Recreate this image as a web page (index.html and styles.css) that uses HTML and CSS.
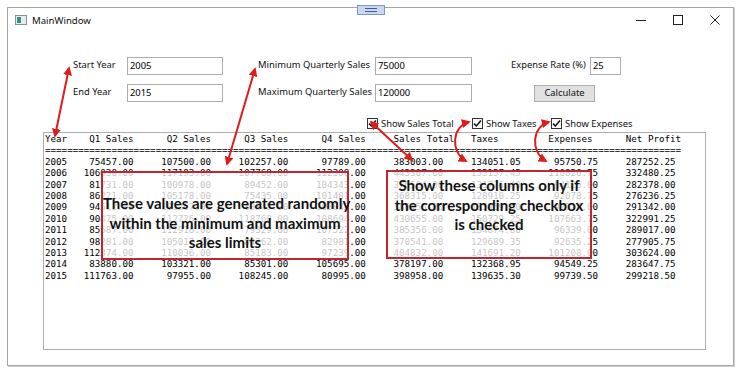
FILE: index.html
```html
<!DOCTYPE html>
<html>
<head>
<meta charset="utf-8">
<link rel="stylesheet" href="styles.css">
</head>
<body>
<div class="window">
  <div class="titlebar">
    <svg class="appicon" width="12" height="10" viewBox="0 0 12 10"><rect x="0.5" y="0.5" width="11" height="9" fill="#e4ecf2" stroke="#8194a4"/><rect x="2" y="2" width="4" height="6" fill="#3b8f80"/></svg>
    <span class="title">MainWindow</span>
    <div class="controls">
      <div class="ctl"><svg width="10" height="10" viewBox="0 0 10 10"><line x1="0" y1="5.5" x2="10" y2="5.5" stroke="#222" stroke-width="1"/></svg></div>
      <div class="ctl"><svg width="10" height="10" viewBox="0 0 10 10"><rect x="0.5" y="0.5" width="9" height="9" fill="none" stroke="#222" stroke-width="1"/></svg></div>
      <div class="ctl"><svg width="10" height="10" viewBox="0 0 10 10"><path d="M0.5 0.5 L9.5 9.5 M9.5 0.5 L0.5 9.5" stroke="#222" stroke-width="1"/></svg></div>
    </div>
  </div>

  <div class="form">
    <div class="group g1">
      <span class="lbl">Start Year</span><div class="field">2005</div>
      <span class="lbl">End Year</span><div class="field">2015</div>
    </div>
    <div class="group g2">
      <span class="lbl">Minimum Quarterly Sales</span><div class="field">75000</div>
      <span class="lbl">Maximum Quarterly Sales</span><div class="field">120000</div>
    </div>
    <div class="group g3">
      <span class="lbl">Expense Rate (%)</span><div class="field">25</div>
      <button class="calc">Calculate</button>
    </div>
  </div>

  <div class="checks">
    <label class="check c1"><span class="box"><svg width="9" height="9" viewBox="0 0 9 9"><path d="M1 4.6 L3.4 7 L8 1.6" fill="none" stroke="#111" stroke-width="1.5"/></svg></span>Show Sales Total</label>
    <label class="check c2"><span class="box"><svg width="9" height="9" viewBox="0 0 9 9"><path d="M1 4.6 L3.4 7 L8 1.6" fill="none" stroke="#111" stroke-width="1.5"/></svg></span>Show Taxes</label>
    <label class="check c3"><span class="box"><svg width="9" height="9" viewBox="0 0 9 9"><path d="M1 4.6 L3.4 7 L8 1.6" fill="none" stroke="#111" stroke-width="1.5"/></svg></span>Show Expenses</label>
  </div>

<pre class="output">Year    Q1 Sales      Q2 Sales      Q3 Sales      Q4 Sales     Sales Total   Taxes         Expenses      Net Profit
===================================================================================================================
2005    75457.00     107500.00     102257.00      97789.00     383003.00     134051.05      95750.75     287252.25
2006   106038.00     117193.00     107768.00     112308.00     443307.00     155157.45     110826.75     332480.25
2007    81731.00     100978.00      89452.00     104343.00     376504.00     131776.40      94126.00     282378.00
2008    86221.00     105178.00      75435.00     101481.00     368315.00     128910.25      92078.75     276236.25
2009    94512.00     101267.00      88845.00     103832.00     388456.00     135959.60      97114.00     291342.00
2010    90475.00     112726.00     118760.00     108694.00     430655.00     150729.25     107663.75     322991.25
2011    85587.00     112918.00      79329.00     107522.00     385356.00     134874.60      96339.00     289017.00
2012    98281.00     105017.00      84262.00      82981.00     370541.00     129689.35      92635.25     277905.75
2013   112374.00     110036.00      85183.00      97239.00     404832.00     141691.20     101208.00     303624.00
2014    83880.00     103321.00      85301.00     105695.00     378197.00     132368.95      94549.25     283647.75
2015   111763.00      97955.00     108245.00      80995.00     398958.00     139635.30      99739.50     299218.50</pre>
</div>

<div class="devtab"><svg width="28" height="10" viewBox="0 0 28 10"><rect x="0.5" y="0.5" width="27" height="9" fill="#cbd7ef" stroke="#7f96c6"/><line x1="8" y1="3.5" x2="20" y2="3.5" stroke="#3c5c9c"/><line x1="8" y1="6.5" x2="20" y2="6.5" stroke="#3c5c9c"/></svg></div>

<div class="note n1">These values are generated randomly<br>within the minimum and maximum<br>sales limits</div>
<div class="note n2">Show these columns only if<br>the corresponding checkbox<br>is checked</div>

<svg class="arrows" width="740" height="373" viewBox="0 0 740 373">
  <defs>
    <marker id="ah" viewBox="0 0 10 10" refX="8" refY="5" markerWidth="4.5" markerHeight="4.5" orient="auto-start-reverse">
      <path d="M0 0 L10 5 L0 10 z" fill="#e01b1b"/>
    </marker>
  </defs>
  <g fill="none" stroke="#e01b1b" stroke-width="2" marker-start="url(#ah)" marker-end="url(#ah)">
    <line x1="69" y1="68" x2="55" y2="136"/>
    <line x1="255" y1="69" x2="227" y2="164"/>
    <line x1="371" y1="122" x2="412" y2="160"/>
    <path d="M469 122 C452 126 450 152 466 161"/>
    <path d="M549 122 C532 126 530 152 546 161"/>
  </g>
</svg>
</body>
</html>
```
FILE: styles.css
```css
body {
  margin: 0;
  width: 740px;
  height: 373px;
  position: relative;
  overflow: hidden;
  background: #ffffff;
  font-family: "Noto Sans", "Open Sans", sans-serif;
  font-size: 9.4px;
  color: #000;
}

.window {
  margin: 7px 0 0 7px;
  width: 727px;
  height: 359px;
  box-sizing: border-box;
  border: 1px solid #a6a6a6;
  box-shadow: 1px 1px 0 #cfcfcf;
  display: flex;
  flex-direction: column;
  background: #fff;
}

.titlebar {
  height: 24px;
  display: flex;
  align-items: center;
  padding-left: 7px;
}

.appicon { display: block; }

.title {
  margin-left: 5px;
  font-size: 9.6px;
  color: #111;
}

.controls {
  margin-left: auto;
  display: flex;
  height: 24px;
}

.ctl {
  width: 37px;
  height: 24px;
  display: flex;
  align-items: center;
  justify-content: center;
}
.ctl svg { display: block; }

.form {
  display: flex;
  margin: 25px 0 0 65px;
}

.group {
  display: grid;
  grid-template-rows: 18px 18px;
  row-gap: 9px;
  align-items: center;
}
.g1 { grid-template-columns: 54px 96px; }
.g2 { grid-template-columns: 117px 97px; margin-left: 35px; }
.g3 { grid-template-columns: 79px 31px; margin-left: 39px; }

.lbl {
  padding-bottom: 3px;
  white-space: nowrap;
  color: #111;
}

.field {
  height: 18px;
  box-sizing: border-box;
  border: 1px solid #abadb3;
  padding-left: 2px;
  display: flex;
  align-items: center;
  padding-bottom: 2px;
  background: #fff;
}

.calc {
  grid-column: 1 / 3;
  justify-self: start;
  align-self: start;
  margin: 1px 0 0 23px;
  width: 61px;
  height: 17px;
  padding: 0 0 2px 0;
  background: #e1e1e1;
  border: 1px solid #adadad;
  font: inherit;
  color: #111;
}

.checks {
  display: flex;
  align-items: center;
  height: 12px;
  margin: 15px 0 0 359px;
}

.check {
  display: flex;
  align-items: center;
  gap: 3px;
  color: #111;
}
.c1 { width: 105px; }
.c2 { width: 79px; }

.box {
  width: 11px;
  height: 11px;
  box-sizing: border-box;
  border: 1px solid #333;
  background: #fff;
  display: flex;
  align-items: center;
  justify-content: center;
}
.box svg { display: block; }

.output {
  margin: 3px 0 0 35px;
  width: 663px;
  height: 218px;
  box-sizing: border-box;
  border: 1px solid #abadb3;
  padding: 0 1px;
  font-family: "DejaVu Sans Mono", "Liberation Mono", monospace;
  font-size: 9.2px;
  line-height: 11.4px;
  white-space: pre;
  overflow: hidden;
  color: #000;
}

.devtab {
  position: absolute;
  left: 357px;
  top: 5px;
  width: 28px;
  height: 10px;
}
.devtab svg { display: block; }

.note {
  position: absolute;
  box-sizing: border-box;
  border: 2px solid #bf2630;
  background: rgba(255, 255, 255, 0.76);
  font-family: "Lato", "Open Sans", sans-serif;
  font-weight: 700;
  font-size: 15px;
  line-height: 19.5px;
  text-align: center;
  color: #111;
  white-space: nowrap;
}
.n1 {
  left: 101px;
  top: 171px;
  width: 248px;
  height: 89px;
  padding-top: 21px;
}
.n2 {
  left: 386px;
  top: 170px;
  width: 206px;
  height: 89px;
  padding-top: 4px;
}

.arrows {
  position: absolute;
  left: 0;
  top: 0;
  pointer-events: none;
}
```
